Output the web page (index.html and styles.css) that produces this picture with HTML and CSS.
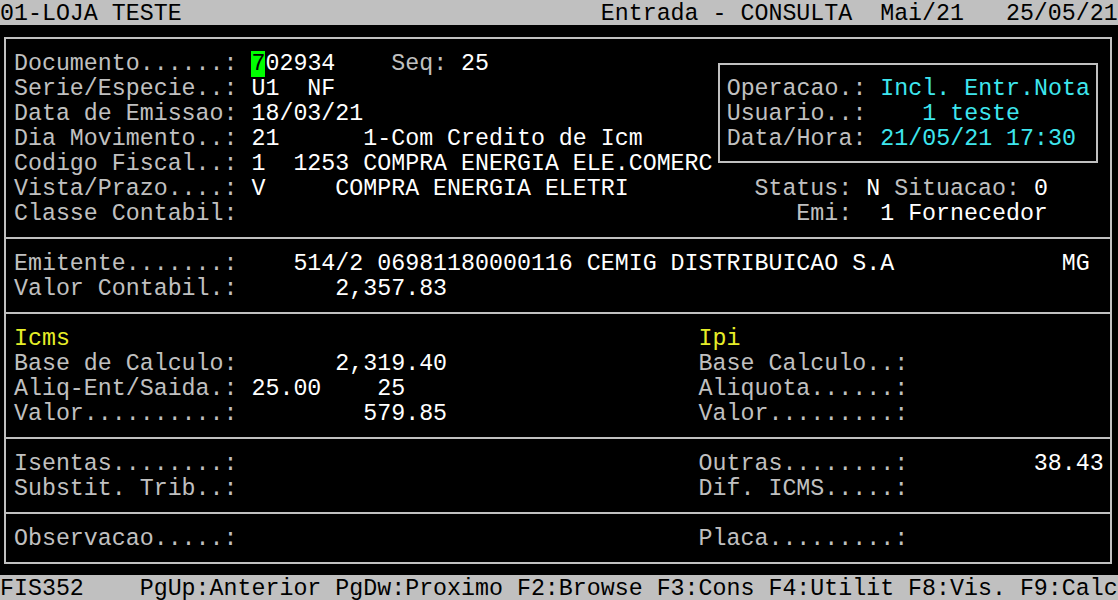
FILE: index.html
```html
<!DOCTYPE html>
<html lang="pt">
<head>
    <meta charset="UTF-8">
    <title>Entrada - CONSULTA</title>
    <link rel="stylesheet" href="styles.css">
</head>
<body>
    <div class="screen">
        <div class="bar">01-LOJA TESTE                              Entrada - CONSULTA  Mai/21   25/05/21</div>

        <div class="main">
            <div class="frame">
                <!-- cabecalho do documento -->
                <section class="sect">
                    <div class="head-grid">
                        <div class="lines">
                            <div class="ln">Documento......: <span class="cur">7</span><span class="val">02934</span>    Seq: <span class="val">25</span></div>
                            <div class="ln">Serie/Especie..: <span class="val">U1  NF</span></div>
                            <div class="ln">Data de Emissao: <span class="val">18/03/21</span></div>
                            <div class="ln">Dia Movimento..: <span class="val">21      1-Com Credito de Icm</span></div>
                            <div class="ln">Codigo Fiscal..: <span class="val">1  1253 COMPRA ENERGIA ELE.COMERC</span></div>
                        </div>
                        <div class="info">
                            <div class="ln">Operacao.: <span class="cyan">Incl. Entr.Nota</span></div>
                            <div class="ln">Usuario..: <span class="cyan">   1 teste</span></div>
                            <div class="ln">Data/Hora: <span class="cyan">21/05/21 17:30</span></div>
                        </div>
                    </div>
                    <div class="ln">Vista/Prazo....: <span class="val">V     COMPRA ENERGIA ELETRI</span>         Status: <span class="val">N</span> Situacao: <span class="val">0</span></div>
                    <div class="ln">Classe Contabil:                                        Emi:  <span class="val">1 Fornecedor</span></div>
                </section>

                <!-- emitente -->
                <section class="sect">
                    <div class="ln">Emitente.......:    <span class="val">514/2 06981180000116 CEMIG DISTRIBUICAO S.A            MG</span></div>
                    <div class="ln">Valor Contabil.:       <span class="val">2,357.83</span></div>
                </section>

                <!-- impostos -->
                <section class="sect">
                    <div class="ln"><span class="yel">Icms</span>                                             <span class="yel">Ipi</span></div>
                    <div class="ln">Base de Calculo:       <span class="val">2,319.40</span>                  Base Calculo..:</div>
                    <div class="ln">Aliq-Ent/Saida.: <span class="val">25.00    25</span>                     Aliquota......:</div>
                    <div class="ln">Valor..........:         <span class="val">579.85</span>                  Valor.........:</div>
                </section>

                <section class="sect">
                    <div class="ln">Isentas........:                                 Outras........:         <span class="val">38.43</span></div>
                    <div class="ln">Substit. Trib..:                                 Dif. ICMS.....:</div>
                </section>

                <section class="sect">
                    <div class="ln">Observacao.....:                                 Placa.........:</div>
                </section>
            </div>
        </div>

        <div class="bar">FIS352    PgUp:Anterior PgDw:Proximo F2:Browse F3:Cons F4:Utilit F8:Vis. F9:Calc</div>
    </div>
</body>
</html>
```

FILE: styles.css
```css
/* tela de terminal 80x24 */
:root {
    --row: 25px;
    --gray: #c0c0c0;
    --cyan: #3ee6ee;
    --yellow: #e6ee28;
}

* {
    margin: 0;
    padding: 0;
    box-sizing: border-box;
}

body {
    background: #000;
    font-family: 'Liberation Mono', 'Courier New', monospace;
    font-size: 23.29px;
    line-height: var(--row);
    color: var(--gray);
}

.screen {
    width: 1118px;
    height: 600px;
    overflow: hidden;
}

.bar {
    height: var(--row);
    padding-top: 4px;
    line-height: 21px;
    background: var(--gray);
    color: #000;
    white-space: pre;
}

.main {
    height: 550px;
    padding: 12px 0 0 4px;
}

.frame {
    width: 1108px;
    border: 2px solid var(--gray);
}

/* texto 2px abaixo do grid para alinhar a linha de base */
.sect {
    padding: 13px 0 10px 7.975px;
}

.sect + .sect {
    border-top: 2px solid var(--gray);
}

.ln {
    height: var(--row);
    white-space: pre;
}

.head-grid {
    display: grid;
    grid-template-columns: 704px 380px;
    height: 125px;
}

.info {
    margin-top: 11px;
    height: 100px;
    border: 2px solid var(--gray);
    padding: 12px 0 0 6.7px;
}

.val {
    color: #fff;
}

.cyan {
    color: var(--cyan);
}

.yel {
    color: var(--yellow);
}

.cur {
    background: #00ff00;
    color: #000;
}
```
